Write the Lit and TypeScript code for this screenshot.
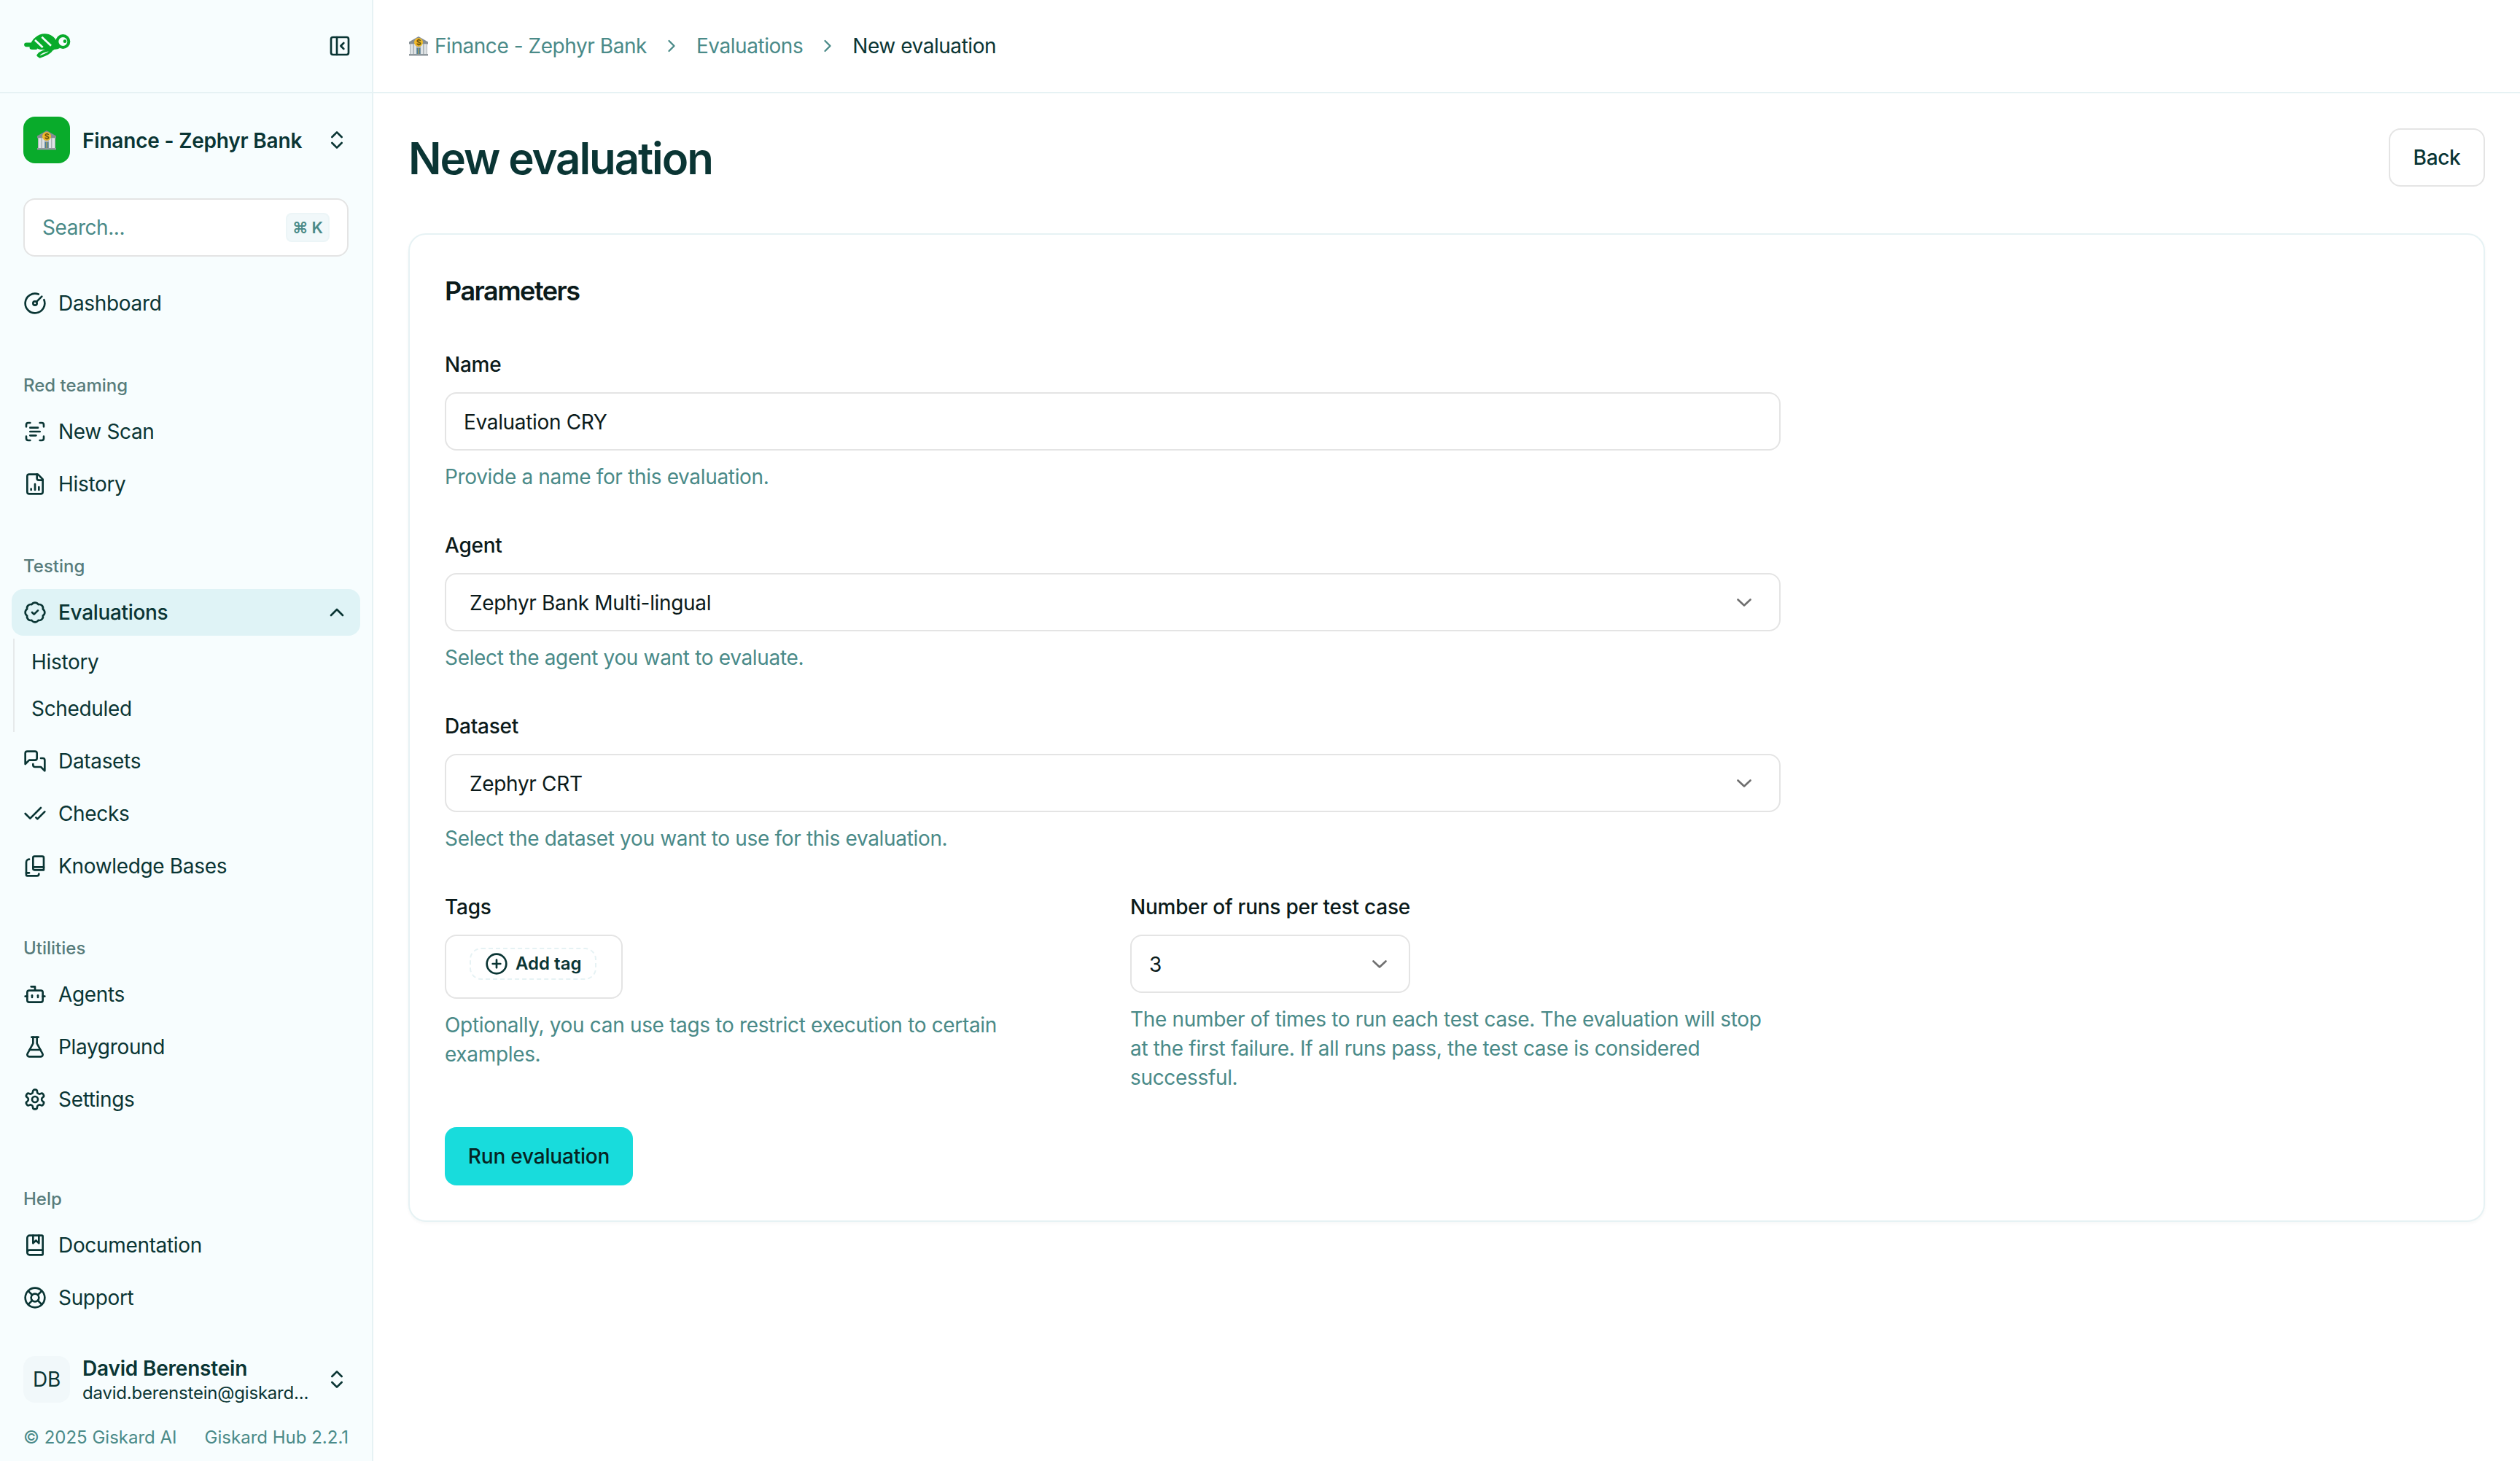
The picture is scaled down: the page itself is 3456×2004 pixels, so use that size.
import { LitElement, html, css, svg } from "lit";
import { customElement } from "lit/decorators.js";

const I: Record<string, string[]> = {
  gauge: ["M15.6 2.7a10 10 0 1 0 5.7 5.7", "M14 12a2 2 0 1 1-4 0a2 2 0 0 1 4 0z", "M13.4 10.6L19 5"],
  scan: ["M3 7V5a2 2 0 0 1 2-2h2", "M17 3h2a2 2 0 0 1 2 2v2", "M21 17v2a2 2 0 0 1-2 2h-2", "M7 21H5a2 2 0 0 1-2-2v-2", "M7 8h8", "M7 12h10", "M7 16h6"],
  file: ["M15 2H6a2 2 0 0 0-2 2v16a2 2 0 0 0 2 2h12a2 2 0 0 0 2-2V7Z", "M14 2v4a2 2 0 0 0 2 2h4", "M8 18v-1", "M12 18v-6", "M16 18v-3"],
  rosette: ["M3.85 8.62a4 4 0 0 1 4.78-4.77a4 4 0 0 1 6.74 0a4 4 0 0 1 4.78 4.78a4 4 0 0 1 0 6.74a4 4 0 0 1-4.77 4.78a4 4 0 0 1-6.75 0a4 4 0 0 1-4.78-4.77a4 4 0 0 1 0-6.76Z", "M9 12l2 2l4-4"],
  messages: ["M14 9a2 2 0 0 1-2 2H6l-4 4V4a2 2 0 0 1 2-2h8a2 2 0 0 1 2 2z", "M18 9h2a2 2 0 0 1 2 2v11l-4-4h-6a2 2 0 0 1-2-2v-1"],
  checks: ["M18 6L7 17l-5-5", "M22 10l-7.5 7.5L13 16"],
  books: ["M11.500 2h8a1.500 1.500 0 0 1 1.500 1.500V16H11.500A1.500 1.500 0 0 1 10 14.500V3.500A1.500 1.500 0 0 1 11.500 2z", "M10 13h11", "M6 5a3 3 0 0 0-3 3v13a1 1 0 0 0 1 1h10a2 2 0 0 0 2-2", "M3 19h3"],
  bot: ["M12 8V4H8", "M6 8h12a2 2 0 0 1 2 2v8a2 2 0 0 1-2 2H6a2 2 0 0 1-2-2v-8a2 2 0 0 1 2-2z", "M2 14h2", "M20 14h2", "M15 13v2", "M9 13v2"],
  flask: ["M14 2v6a2 2 0 0 0 .245.96l5.51 10.08A2 2 0 0 1 18 22H6a2 2 0 0 1-1.755-2.96l5.51-10.08A2 2 0 0 0 10 8V2", "M6.453 15h11.094", "M8.500 2h7"],
  settings: ["M12.220 2h-.44a2 2 0 0 0-2 2v.18a2 2 0 0 1-1 1.730l-.43.25a2 2 0 0 1-2 0l-.15-.08a2 2 0 0 0-2.730.73l-.22.38a2 2 0 0 0 .73 2.730l.15.1a2 2 0 0 1 1 1.720v.51a2 2 0 0 1-1 1.740l-.15.09a2 2 0 0 0-.73 2.730l.22.38a2 2 0 0 0 2.730.73l.15-.08a2 2 0 0 1 2 0l.43.25a2 2 0 0 1 1 1.730V20a2 2 0 0 0 2 2h.44a2 2 0 0 0 2-2v-.18a2 2 0 0 1 1-1.730l.43-.25a2 2 0 0 1 2 0l.15.08a2 2 0 0 0 2.730-.73l.22-.39a2 2 0 0 0-.73-2.730l-.15-.08a2 2 0 0 1-1-1.740v-.5a2 2 0 0 1 1-1.740l.15-.09a2 2 0 0 0 .73-2.730l-.22-.38a2 2 0 0 0-2.730-.73l-.15.08a2 2 0 0 1-2 0l-.43-.25a2 2 0 0 1-1-1.730V4a2 2 0 0 0-2-2z", "M15 12a3 3 0 1 1-6 0a3 3 0 0 1 6 0z"],
  book: ["M10 2v8l3-3l3 3V2", "M4 19.500v-15A2.500 2.500 0 0 1 6.500 2H19a1 1 0 0 1 1 1v18a1 1 0 0 1-1 1H6.500a1 1 0 0 1 0-5H20"],
  buoy: ["M22 12a10 10 0 1 1-20 0a10 10 0 0 1 20 0z", "M4.930 4.930l4.240 4.240", "M14.830 9.170l4.240-4.240", "M14.830 14.830l4.240 4.240", "M9.170 14.830l-4.240 4.240", "M16 12a4 4 0 1 1-8 0a4 4 0 0 1 8 0z"],
  selector: ["M7 15l5 5l5-5", "M7 9l5-5l5 5"],
  up: ["M18 15l-6-6l-6 6"],
  right: ["M9 18l6-6l-6-6"],
  collapse: ["M5 3h14a2 2 0 0 1 2 2v14a2 2 0 0 1-2 2H5a2 2 0 0 1-2-2V5a2 2 0 0 1 2-2z", "M9 3v18", "M16 15l-3-3l3-3"],
  plus: ["M22 12a10 10 0 1 1-20 0a10 10 0 0 1 20 0z", "M8 12h8", "M12 8v8"],
};

const icon = (name: string) => html`<svg class="ic" viewBox="0 0 24 24" fill="none" stroke="currentColor" stroke-width="2" stroke-linecap="round" stroke-linejoin="round">${I[name].map((d) => svg`<path d=${d}></path>`)}</svg>`;

const chevron = html`<svg class="chev" viewBox="0 0 20 11" fill="none" stroke="#6f6f6f" stroke-width="2.600" stroke-linecap="round" stroke-linejoin="round"><path d="M1.500 1.500L10 9.500L18.500 1.500"></path></svg>`;

const bank = html`<svg class="bank" viewBox="0 0 28 28">
  <path d="M14 1L27 8.500V11.500H1V8.500z" fill="#848d93"></path>
  <rect x="2" y="11" width="24" height="14" fill="#a9b1b5"></rect>
  <rect x="3" y="11.500" width="3.500" height="13.500" fill="#dfe3e5"></rect>
  <rect x="8" y="11.500" width="3" height="13.500" fill="#dfe3e5"></rect>
  <rect x="17" y="11.500" width="3" height="13.500" fill="#dfe3e5"></rect>
  <rect x="21.500" y="11.500" width="3.500" height="13.500" fill="#dfe3e5"></rect>
  <rect x="11.500" y="17" width="5" height="8" fill="#4d7f9a"></rect>
  <rect x="13.500" y="17" width="1" height="8" fill="#d9a92c"></rect>
  <rect x="1" y="25" width="26" height="2.500" fill="#8f989d"></rect>
  <circle cx="14" cy="9" r="6" fill="#f0bb2c"></circle>
  <text x="14" y="12.800" text-anchor="middle" font-family="Inter, sans-serif" font-size="10.500" font-weight="700" fill="#6f5409">$</text>
</svg>`;

const logo = html`<svg class="logo" viewBox="0 0 252 156">
  <path d="M36 76H72" stroke="#09ab2b" stroke-width="17" stroke-linecap="round" fill="none"></path>
  <path d="M50 86C56 54 84 31 112 31C136 31 152 44 162 62L174 90C162 96 150 96 140 96H62C54 96 48 92 50 86z" fill="#09ab2b"></path>
  <circle cx="187" cy="63" r="24" fill="#f7fdfe" stroke="#09ab2b" stroke-width="12"></circle>
  <circle cx="195" cy="62" r="7" fill="#09ab2b"></circle>
  <path d="M72 57L104 87M100 44L138 80" stroke="#f7fdfe" stroke-width="8" stroke-linecap="butt" fill="none"></path>
  <path d="M84 120Q98 100 142 96Q132 113 92 126Z" fill="#f7fdfe" stroke="#09ab2b" stroke-width="10" stroke-linejoin="round"></path>
  <path d="M142 96Q150 86 158 84" stroke="#09ab2b" stroke-width="12" fill="none"></path>
  <path d="M80 94L96 100" stroke="#f7fdfe" stroke-width="5" fill="none"></path>
</svg>`;

interface Row { label: string; ic: string; }
const redTeam: Row[] = [{ label: "New Scan", ic: "scan" }, { label: "History", ic: "file" }];
const testing: Row[] = [{ label: "Datasets", ic: "messages" }, { label: "Checks", ic: "checks" }, { label: "Knowledge Bases", ic: "books" }];
const utilities: Row[] = [{ label: "Agents", ic: "bot" }, { label: "Playground", ic: "flask" }, { label: "Settings", ic: "settings" }];
const help: Row[] = [{ label: "Documentation", ic: "book" }, { label: "Support", ic: "buoy" }];

const row = (r: Row) => html`<div class="row">${icon(r.ic)}<span>${r.label}</span></div>`;

@customElement("app-root")
export class AppRoot extends LitElement {
  static styles = css`
    :host { display: block; font-family: Inter, "Liberation Sans", sans-serif; color: #0a3534; font-size: 28px; line-height: 40px; letter-spacing: -0.33px; }
    * { box-sizing: border-box; }
    .app { display: flex; min-height: 2004px; background: #fff; }
    .side { width: 512px; flex: none; min-height: 2004px; background: #f7fdfe; border-right: 2px solid #e6f2f4; display: flex; flex-direction: column; }
    .side-top { height: 128px; flex: none; border-bottom: 2px solid #e6f2f4; display: flex; align-items: center; justify-content: space-between; padding: 0 28px 0 24px; }
    .logo { width: 84px; height: 52px; display: block; margin-top: -2px; }
    .ic { width: 32px; height: 32px; flex: none; display: block; }
    .collapse { width: 32px; height: 32px; color: #0a3534; }
    .body { flex: 1; display: flex; flex-direction: column; padding: 32px 16px 16px; }
    .project { display: flex; align-items: center; gap: 17px; padding: 0 16px; height: 64px; font-weight: 600; letter-spacing: -0.2px; }
    .tile { width: 64px; height: 64px; border-radius: 16px; background: #09ab2b; display: flex; align-items: center; justify-content: center; flex: none; }
    .name { flex: 1; white-space: nowrap; padding-top: 2px; }
    .search { margin: 48px 16px 32px; width: 446px; height: 80px; border: 2px solid #e4e4e4; border-radius: 16px; background: #fff; display: flex; align-items: center; justify-content: space-between; padding: 0 24px; color: #4a8a88; letter-spacing: -0.45px; }
    .kbd { width: 60px; height: 40px; border: 2px solid #ecf5f7; background: #f1f8fa; border-radius: 8px; display: flex; align-items: center; justify-content: center; gap: 5px; font-size: 22px; font-weight: 600; color: #4a8a88; line-height: 1; letter-spacing: 0; }
    .row { height: 64px; display: flex; align-items: center; gap: 16px; padding: 0 16px; border-radius: 16px; white-space: nowrap; }
    .rows { display: flex; flex-direction: column; gap: 8px; }
    .group { margin-top: 64px; display: flex; flex-direction: column; }
    .group.help { margin-top: auto; }
    .glabel { height: 32px; line-height: 32px; padding: 1px 16px 0; font-size: 24px; font-weight: 500; color: #587c7b; margin-bottom: 16px; letter-spacing: 0; }
    .row.active { background: #dff3f6; font-weight: 500; }
    .row.active span { flex: 1; }
    .sub { margin: 4px 0 0 2px; border-left: 2px solid #e6eaeb; }
    .sub div { height: 64px; display: flex; align-items: center; padding-left: 23px; }
    .user { margin-top: 48px; display: flex; align-items: center; gap: 17px; padding: 0 16px; height: 64px; }
    .avatar { width: 64px; height: 64px; border-radius: 16px; background: #f1f8fa; display: flex; align-items: center; justify-content: center; flex: none; }
    .uinfo { flex: 1; min-width: 0; display: flex; flex-direction: column; padding-top: 4px; }
    .uname { font-weight: 600; line-height: 34px; letter-spacing: -0.2px; }
    .umail { font-size: 24px; line-height: 34px; white-space: nowrap; letter-spacing: -0.2px; }
    .foot { margin-top: 32px; display: flex; justify-content: space-between; padding: 0 16px; font-size: 24px; line-height: 32px; color: #4a8a88; white-space: nowrap; letter-spacing: 0; }
    .main { flex: 1; min-width: 0; display: flex; flex-direction: column; }
    .crumbs { height: 128px; border-bottom: 2px solid #e6f2f4; display: flex; align-items: center; padding: 0 48px; color: #4a8a88; white-space: nowrap; letter-spacing: -0.45px; }
    .crumb { display: flex; align-items: center; gap: 8px; }
    .bank { width: 28px; height: 28px; display: block; flex: none; }
    .csep { width: 28px; height: 28px; color: #4a8a88; margin: 0 20px; flex: none; display: block; }
    .csep .ic { width: 28px; height: 28px; stroke-width: 2; }
    .now { color: #0a3534; }
    .content { padding: 48px; display: flex; flex-direction: column; gap: 64px; }
    .head { display: flex; align-items: center; justify-content: space-between; height: 80px; }
    h1 { margin: 0; font-size: 60px; line-height: 80px; font-weight: 600; color: #0a3534; letter-spacing: -2.1px; padding-top: 1px; }
    .back { width: 132px; height: 80px; border: 2px solid #e4e4e4; border-radius: 16px; background: #fff; display: flex; align-items: center; justify-content: center; font-weight: 500; }
    .card { border: 2px solid #e6f2f4; border-radius: 24px; padding: 48px; background: #fff; box-shadow: 0 2px 4px rgba(10, 53, 52, 0.04); display: flex; flex-direction: column; }
    h2 { margin: 0; font-size: 36px; line-height: 56px; font-weight: 600; color: #0b1a1a; letter-spacing: -1.5px; padding-top: 1px; height: 56px; }
    .form { width: 1832px; display: flex; flex-direction: column; gap: 54px; margin-top: 54px; }
    label { display: block; font-weight: 500; color: #0b1a1a; margin-bottom: 18px; letter-spacing: -0.24px; }
    .input { height: 80px; border: 2px solid #e4e4e4; border-radius: 16px; background: #fff; display: flex; align-items: center; justify-content: space-between; color: #0b1a1a; padding-top: 1px; }
    .input.text { padding-left: 24px; }
    .input.select { padding-left: 32px; padding-right: 38px; }
    .input.small { width: 384px; padding-left: 24px; padding-right: 30px; }
    .chev { width: 20px; height: 11px; display: block; flex: none; margin-top: -1px; }
    .hint { margin-top: 16px; color: #4a8a88; }
    .two { display: grid; grid-template-columns: 892px 892px; gap: 48px; margin-bottom: -6px; }
    .tagbox { width: 244px; height: 88px; border: 2px solid #e4e4e4; border-radius: 16px; padding: 16px 32px; display: flex; align-items: flex-start; }
    .dash { width: 174px; height: 44px; border: 2px dashed #e6f2f4; border-radius: 16px; display: flex; align-items: center; padding-left: 19px; gap: 10px; font-size: 24px; font-weight: 600; line-height: 32px; white-space: nowrap; letter-spacing: 0; }
    .run { align-self: flex-start; width: 258px; height: 80px; background: #18dcdc; border-radius: 16px; display: flex; align-items: center; justify-content: center; font-weight: 500; color: #062322; letter-spacing: -0.2px; }
  `;

  render() {
    return html`<div class="app">
      <aside class="side">
        <div class="side-top">${logo}<div class="collapse">${icon("collapse")}</div></div>
        <div class="body">
          <div class="project"><div class="tile">${bank}</div><span class="name">Finance - Zephyr Bank</span>${icon("selector")}</div>
          <div class="search"><span>Search...</span><div class="kbd"><span>⌘</span><span>K</span></div></div>
          <div class="row">${icon("gauge")}<span>Dashboard</span></div>
          <div class="group"><div class="glabel">Red teaming</div><div class="rows">${redTeam.map(row)}</div></div>
          <div class="group"><div class="glabel">Testing</div>
            <div class="rows">
              <div>
                <div class="row active">${icon("rosette")}<span>Evaluations</span>${icon("up")}</div>
                <div class="sub"><div>History</div><div>Scheduled</div></div>
              </div>
              ${testing.map(row)}
            </div>
          </div>
          <div class="group"><div class="glabel">Utilities</div><div class="rows">${utilities.map(row)}</div></div>
          <div class="group help"><div class="glabel">Help</div><div class="rows">${help.map(row)}</div></div>
          <div class="user">
            <div class="avatar">DB</div>
            <div class="uinfo"><div class="uname">David Berenstein</div><div class="umail">david.berenstein@giskard...</div></div>
            ${icon("selector")}
          </div>
          <div class="foot"><span>© 2025 Giskard AI</span><span>Giskard Hub 2.2.1</span></div>
        </div>
      </aside>
      <main class="main">
        <nav class="crumbs">
          <div class="crumb">${bank}<span>Finance - Zephyr Bank</span></div>
          <div class="csep">${icon("right")}</div>
          <span>Evaluations</span>
          <div class="csep">${icon("right")}</div>
          <span class="now">New evaluation</span>
        </nav>
        <div class="content">
          <div class="head"><h1>New evaluation</h1><div class="back">Back</div></div>
          <section class="card">
            <h2>Parameters</h2>
            <div class="form">
              <div><label>Name</label><div class="input text">Evaluation CRY</div><div class="hint">Provide a name for this evaluation.</div></div>
              <div><label>Agent</label><div class="input select"><span>Zephyr Bank Multi-lingual</span>${chevron}</div><div class="hint">Select the agent you want to evaluate.</div></div>
              <div><label>Dataset</label><div class="input select"><span>Zephyr CRT</span>${chevron}</div><div class="hint">Select the dataset you want to use for this evaluation.</div></div>
              <div class="two">
                <div><label>Tags</label><div class="tagbox"><div class="dash">${icon("plus")}<span>Add tag</span></div></div><div class="hint">Optionally, you can use tags to restrict execution to certain examples.</div></div>
                <div><label>Number of runs per test case</label><div class="input small"><span>3</span>${chevron}</div><div class="hint">The number of times to run each test case. The evaluation will stop at the first failure. If all runs pass, the test case is considered successful.</div></div>
              </div>
              <div class="run">Run evaluation</div>
            </div>
          </section>
        </div>
      </main>
    </div>`;
  }
}
